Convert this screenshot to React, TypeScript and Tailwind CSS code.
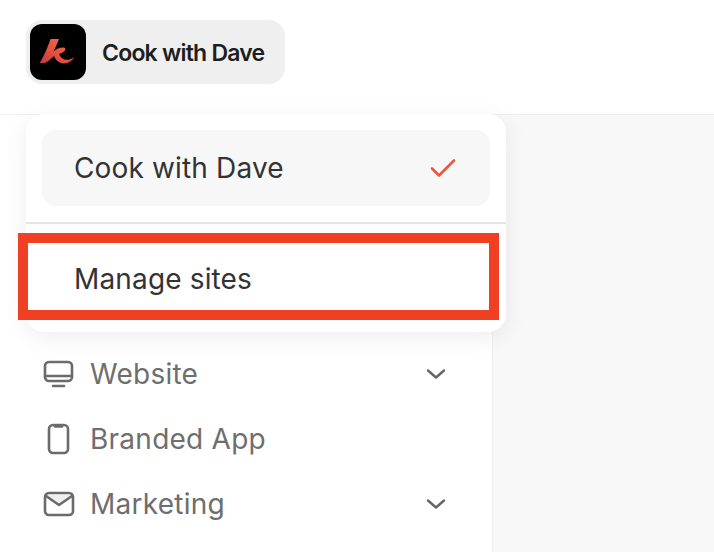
import React from "react";

const Chevron = () => (
  <svg width="20" height="12" viewBox="0 0 20 12" fill="none" stroke="#666666" strokeWidth="2.4" strokeLinecap="round" strokeLinejoin="round">
    <path d="M2 2.5 L10 9.5 L18 2.5" />
  </svg>
);

const Logo = () => (
  <div className="w-14 h-14 rounded-[12px] bg-black flex items-center justify-center shrink-0">
    <svg width="56" height="56" viewBox="0 0 56 56">
      <defs>
        <linearGradient id="lg" x1="0" y1="1" x2="1" y2="0">
          <stop offset="0" stopColor="#b8384a" />
          <stop offset="0.5" stopColor="#e8553f" />
          <stop offset="1" stopColor="#f4705a" />
        </linearGradient>
      </defs>
      <path d="M20.500 15 L29 15 C27 20 25 24.500 23.500 27.500 C26 25 30 23.500 33 23.500 C35.500 23.500 36 25.500 34.500 27 C33 28.500 30.500 29.500 29 30 C30.500 33 32.500 35.500 36 35.800 C39 36 42 35 44 33 C42.500 36.500 38.500 39.500 33.500 39.500 C28.500 39.500 25.500 35.500 24 32 C21.500 34.500 18.500 37 15 39 L9.500 39 C13 34 17.500 24 20.500 15 Z" fill="url(#lg)" />
    </svg>
  </div>
);

const NavRow = ({ icon, label, chevron }: { icon: React.ReactNode; label: string; chevron?: boolean }) => (
  <div className="flex items-center h-[65px] pl-[42px] pr-[46px]">
    <div className="w-[33px] flex justify-center shrink-0">{icon}</div>
    <span className="ml-[15px] flex-1 text-[28px] tracking-[0.25px] text-[#6e6e6e]">{label}</span>
    {chevron && <Chevron />}
  </div>
);

export default function App() {
  return (
    <div className="relative w-[714px] h-[552px] overflow-hidden bg-white flex flex-col font-[Inter,sans-serif]">
      <header className="h-[115px] shrink-0 border-b border-[#efefef] pt-5 pl-[26px]">
        <div className="inline-flex items-center h-16 w-[259px] rounded-[16px] bg-[#efefef] pl-1">
          <Logo />
          <span className="ml-4 mt-0.5 text-[23px] font-semibold tracking-[-0.78px] text-[#1e1e1e]">Cook with Dave</span>
        </div>
      </header>
      <div className="flex flex-1 min-h-0">
        <aside className="w-[493px] shrink-0 border-r border-[#efefef] bg-white pt-[226px]">
          <NavRow
            label="Website"
            chevron
            icon={
              <svg width="32" height="28" viewBox="0 0 32 28" fill="none" stroke="#6b6b6b" strokeWidth="2.6" strokeLinecap="round" strokeLinejoin="round">
                <rect x="2" y="2" width="27" height="19" rx="4" />
                <path d="M2 16 H29" />
                <path d="M10 26 H21" />
              </svg>
            }
          />
          <NavRow
            label="Branded App"
            icon={
              <svg width="23" height="32" viewBox="0 0 23 32" fill="none" stroke="#6b6b6b" strokeWidth="2.6" strokeLinecap="round" strokeLinejoin="round">
                <rect x="2" y="2" width="19" height="28" rx="4" />
                <path d="M8 3.500 H15" />
              </svg>
            }
          />
          <NavRow
            label="Marketing"
            chevron
            icon={
              <svg width="32" height="26" viewBox="0 0 32 26" fill="none" stroke="#6b6b6b" strokeWidth="2.6" strokeLinecap="round" strokeLinejoin="round">
                <path d="M3 4 L16 14 L29 4" fill="#efefef" stroke="none" />
                <rect x="2" y="2" width="28" height="22" rx="4" />
                <path d="M3 5 L16 14 L29 5" />
              </svg>
            }
          />
        </aside>
        <main className="flex-1 bg-[#f8f8f8]" />
      </div>

      <div className="absolute left-[26px] top-[114px] w-[480px] h-[218px] rounded-[18px] bg-white shadow-[0_6px_24px_rgba(0,0,0,0.07)] flex flex-col">
        <div className="px-4 pt-4 pb-4 border-b-2 border-[#e6e6e6]">
          <div className="h-[76px] rounded-[14px] bg-[#f7f7f7] flex items-center justify-between pl-[32px] pr-[34px]">
            <span className="text-[28px] tracking-[0.15px] text-[#333333]">Cook with Dave</span>
            <svg width="26" height="20" viewBox="0 0 26 20" fill="none" stroke="#f0553c" strokeWidth="2.6" strokeLinecap="round" strokeLinejoin="round">
              <path d="M2 10.500 L9 17.500 L24 2.500" />
            </svg>
          </div>
        </div>
        <div className="flex-1 flex items-start pl-[48px] pt-[35px]">
          <span className="text-[28px] leading-[40px] tracking-[0.15px] text-[#333333]">Manage sites</span>
        </div>
      </div>

      <div className="absolute left-[18px] top-[233px] w-[481px] h-[87px] border-[10px] border-[#ef4023]" />
    </div>
  );
}
